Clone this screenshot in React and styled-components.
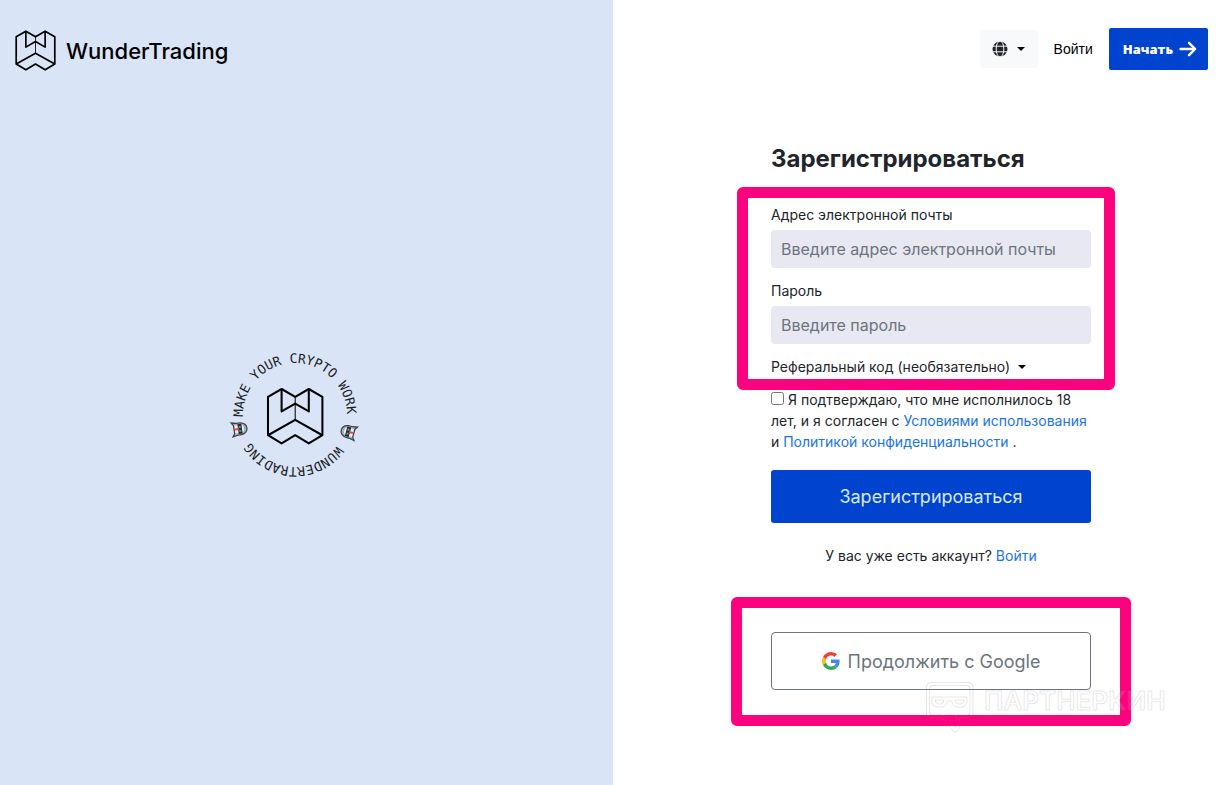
import { useId } from 'react';
import styled, { createGlobalStyle } from 'styled-components';

const GlobalStyle = createGlobalStyle`
  *,
  *::before,
  *::after {
    box-sizing: border-box;
  }

  body {
    margin: 0;
    color: #212529;
    background-color: #fff;
    font-family: Inter, 'Liberation Sans', sans-serif;
    font-size: 14px;
    line-height: 21px;
  }

  button,
  input {
    font: inherit;
  }
`;

const Page = styled.div`
  display: grid;
  grid-template-columns: 613fr 604fr;
  min-height: 100vh;
`;

const BrandPanel = styled.aside`
  display: flex;
  flex-direction: column;
  background-color: #d9e4f7;
`;

const Brand = styled.a`
  display: flex;
  align-items: center;
  gap: 10px;
  padding: 30px 15px 0;
  color: #000;
  font-size: 22px;
  font-weight: 500;
  line-height: 40px;
  text-decoration: none;
`;

const EmblemArea = styled.div`
  flex: 1;
  display: flex;
  align-items: center;
  justify-content: center;
  padding: 0 23px 26px 0;
`;

const FormPanel = styled.div`
  display: flex;
  flex-direction: column;
`;

const Header = styled.header`
  display: flex;
  align-items: center;
  justify-content: flex-end;
  gap: 16px;
  padding: 28px 9px 0 0;
`;

const LanguageButton = styled.button`
  display: flex;
  align-items: center;
  gap: 9px;
  height: 38px;
  padding: 0 13px 0 12px;
  border: 0;
  border-radius: 4px;
  color: #212529;
  background-color: #f8f9fa;
`;

const HeaderLink = styled.a`
  color: #000;
  font-family: 'Liberation Sans', Arial, sans-serif;
  font-size: 14px;
  text-decoration: none;
`;

const StartButton = styled.button`
  display: flex;
  align-items: center;
  justify-content: center;
  gap: 6px;
  height: 42px;
  padding: 0 11px 0 14px;
  border: 0;
  border-radius: 2px;
  color: #fff;
  background-color: #0043ce;
  font-family: 'Open Sans', 'Noto Sans', sans-serif;
  font-size: 13px;
  font-weight: 800;
`;

const Main = styled.main`
  padding: 74px 0 32px 32px;
`;

const Form = styled.form`
  width: 320px;
  margin: 0 auto;
`;

const Title = styled.h1`
  margin: 0 0 31px;
  font-size: 24px;
  font-weight: 700;
  line-height: 30px;
`;

const Marked = styled.div`
  position: relative;
`;

const Frame = styled.div`
  position: absolute;
  inset: ${({ $inset }) => $inset};
  border: 11px solid #ff007f;
  border-radius: 6px;
  pointer-events: none;
`;

const Fields = styled(Marked)`
  display: grid;
  gap: 13px;
`;

const Field = styled.div`
  display: grid;
  gap: 5px;
`;

const Label = styled.label`
  line-height: 20px;
`;

const Input = styled.input`
  width: 100%;
  height: 38px;
  padding: 0 10px;
  border: 0;
  border-radius: 4px;
  color: #212529;
  background-color: #e8e8f2;
  font-size: 16px;

  &::placeholder {
    color: #6c757d;
    opacity: 1;
  }
`;

const ReferralToggle = styled.button`
  display: flex;
  align-items: center;
  gap: 8px;
  padding: 0;
  border: 0;
  color: #212529;
  background: none;
  line-height: 20px;
`;

const Consent = styled.p`
  margin: 12px 0 18px;
`;

const Checkbox = styled.input`
  width: 13px;
  height: 13px;
  margin: 0 4px 0 0;
`;

const Link = styled.a`
  color: #1a73e8;
  text-decoration: none;
`;

const SubmitButton = styled.button`
  width: 100%;
  height: 53px;
  border: 0;
  border-radius: 3px;
  color: #d9e9ff;
  background-color: #0043ce;
  font-size: 18px;
`;

const LoginHint = styled.p`
  margin: 22px 0 66px;
  text-align: center;
`;

const GoogleButton = styled.button`
  display: flex;
  align-items: center;
  justify-content: center;
  gap: 8px;
  width: 100%;
  height: 58px;
  border: 1px solid #6c757d;
  border-radius: 4px;
  color: #6c757d;
  background-color: #fff;
  font-size: 18px;
`;

const Watermark = styled.svg`
  position: absolute;
  top: 49px;
  left: 154px;
  pointer-events: none;
`;

function MarkShape({ strokeWidth }) {
  return (
    <g fill="none" stroke="#000" strokeWidth={strokeWidth} strokeLinejoin="round">
      <path d="M0 23 40 0 80 23 120 0 160 23V136L120 160 80 136 40 160 0 136Z" />
      <path d="M40 0V66L80 43 120 66V0" />
      <path d="M0 136 80 91 160 136" />
      <path d="M80 23V91" strokeWidth={strokeWidth / 2} />
    </g>
  );
}

function Logo() {
  return (
    <svg width="41" height="41" viewBox="-5 -5 170 170" aria-hidden="true">
      <MarkShape strokeWidth={7} />
    </svg>
  );
}

function Robot({ transform }) {
  return (
    <g transform={transform}>
      <path
        d="M-6-2-7-7-4-5H4L7-7 6-2V2Q5 8 0 8T-6 2Z"
        fill="#a9adb6"
        stroke="#3c4048"
        strokeWidth="1.2"
      />
      <path d="M-4-4H4V3Q3 5 0 5T-4 3Z" fill="#f1f2f5" />
      <path d="M-5-1H5V3H-5Z" fill="#23282f" />
      <path d="M-3 0H-1V2H-3ZM1 0H3V2H1Z" fill="#3fa3bb" />
      <path d="M-1-4H1V0H-1Z" fill="#e4472f" />
    </g>
  );
}

function Emblem() {
  const ringId = useId();

  return (
    <svg width="136" height="136" viewBox="-68 -68 136 136">
      <path id={ringId} d="M-52 2A52 52 0 1 1 52-2A52 52 0 1 1-52 2" fill="none" />
      <g fill="#1c1f26" fontFamily="'DejaVu Sans Mono', monospace" fontSize="13">
        <text>
          <textPath href={`#${ringId}`}>MAKE YOUR CRYPTO WORK</textPath>
        </text>
        <text>
          <textPath href={`#${ringId}`} startOffset="198">
            WUNDERTRADING
          </textPath>
        </text>
      </g>
      <Robot transform="translate(54 17) rotate(105)" />
      <Robot transform="translate(-56 14) rotate(-98)" />
      <g transform="translate(-27 -26) scale(.34)">
        <MarkShape strokeWidth={6} />
      </g>
    </svg>
  );
}

function GlobeIcon() {
  return (
    <svg width="16" height="16" viewBox="0 0 16 16" aria-hidden="true">
      <circle cx="8" cy="8" r="7.5" fill="#212529" />
      <g fill="none" stroke="#f8f9fa" strokeWidth="1">
        <path d="M0 5.2H16M0 10.8H16" />
        <ellipse cx="8" cy="8" rx="3.8" ry="8" />
      </g>
    </svg>
  );
}

function Caret() {
  return (
    <svg width="8" height="4" viewBox="0 0 8 4" aria-hidden="true">
      <path d="M0 0H8L4 4Z" fill="#000" />
    </svg>
  );
}

function ArrowIcon() {
  return (
    <svg width="18" height="16" viewBox="0 0 18 16" aria-hidden="true">
      <path
        d="M1.5 8H16M10 1.8 16.2 8 10 14.2"
        fill="none"
        stroke="#fff"
        strokeWidth="2.4"
        strokeLinecap="round"
        strokeLinejoin="round"
      />
    </svg>
  );
}

function GoogleIcon() {
  return (
    <svg width="18" height="18" viewBox="0 0 48 48" aria-hidden="true">
      <path
        fill="#ea4335"
        d="M24 9.5c3.54 0 6.71 1.22 9.21 3.6l6.85-6.85C35.9 2.38 30.47 0 24 0 14.62 0 6.51 5.38 2.56 13.22l7.98 6.19C12.43 13.72 17.74 9.5 24 9.5z"
      />
      <path
        fill="#4285f4"
        d="M46.98 24.55c0-1.57-.15-3.09-.38-4.55H24v9.02h12.94c-.58 2.96-2.26 5.48-4.78 7.18l7.73 6c4.51-4.18 7.09-10.36 7.09-17.65z"
      />
      <path
        fill="#fbbc05"
        d="M10.53 28.59c-.48-1.45-.76-2.99-.76-4.59s.27-3.14.76-4.59l-7.98-6.19C.92 16.46 0 20.12 0 24c0 3.88.92 7.54 2.56 10.78l7.97-6.19z"
      />
      <path
        fill="#34a853"
        d="M24 48c6.48 0 11.93-2.13 15.89-5.81l-7.73-6c-2.15 1.45-4.92 2.3-8.16 2.3-6.26 0-11.57-4.22-13.47-9.91l-7.98 6.19C6.51 42.62 14.62 48 24 48z"
      />
    </svg>
  );
}

function PartnerMark() {
  return (
    <Watermark width="244" height="54" viewBox="0 0 244 54">
      <g fill="none" stroke="#808080" strokeOpacity=".2">
        <path d="M6 1.5H43Q48 1.5 48 6.5V32Q48 37 43 37H34V48Q31 54 27 49L17 37H6Q1.5 37 1.5 32V6.5Q1.5 1.5 6 1.5Z" />
        <path d="M8 4.5H42Q45 4.5 45 7.5V31Q45 34 42 34H31V47L18 34H8Q4.5 34 4.5 31V7.5Q4.5 4.5 8 4.5Z" />
        <path d="M7 16H42V20Q42 26 36 26H33Q27 26 27 20H22Q22 26 16 26H13Q7 26 7 20Z" />
        <path d="M10 19H19Q19 23 15 23H14Q10 23 10 19ZM30 19H39Q39 23 35 23H34Q30 23 30 19Z" />
      </g>
      <text
        x="59"
        y="29"
        fill="#fff"
        fillOpacity=".12"
        stroke="#808080"
        strokeOpacity=".2"
        fontSize="26"
        fontWeight="600"
      >
        ПАРТНЕРКИН
      </text>
    </Watermark>
  );
}

function TextField({ id, label, ...props }) {
  return (
    <Field>
      <Label htmlFor={id}>{label}</Label>
      <Input id={id} {...props} />
    </Field>
  );
}

function SignUpForm() {
  return (
    <Form onSubmit={(e) => e.preventDefault()}>
      <Title>Зарегистрироваться</Title>

      <Fields>
        <TextField
          id="email"
          type="email"
          label="Адрес электронной почты"
          placeholder="Введите адрес электронной почты"
        />
        <TextField
          id="password"
          type="password"
          label="Пароль"
          placeholder="Введите пароль"
        />
        <ReferralToggle type="button">
          Реферальный код (необязательно)
          <Caret />
        </ReferralToggle>
        <Frame $inset="-18px -24px -13px -34px" />
      </Fields>

      <Consent>
        <Checkbox type="checkbox" id="consent" />
        <label htmlFor="consent">
          Я подтверждаю, что мне исполнилось 18 лет, и я согласен с{' '}
          <Link href="#terms">Условиями использования</Link> и{' '}
          <Link href="#privacy">Политикой конфиденциальности</Link> .
        </label>
      </Consent>

      <SubmitButton type="submit">Зарегистрироваться</SubmitButton>

      <LoginHint>
        У вас уже есть аккаунт? <Link href="#login">Войти</Link>
      </LoginHint>

      <Marked>
        <GoogleButton type="button">
          <GoogleIcon />
          Продолжить с Google
        </GoogleButton>
        <Frame $inset="-35px -40px -36px -40px" />
        <PartnerMark />
      </Marked>
    </Form>
  );
}

function App() {
  return (
    <>
      <GlobalStyle />
      <Page>
        <BrandPanel>
          <Brand href="#home">
            <Logo />
            WunderTrading
          </Brand>
          <EmblemArea>
            <Emblem />
          </EmblemArea>
        </BrandPanel>

        <FormPanel>
          <Header>
            <LanguageButton type="button" aria-label="Язык">
              <GlobeIcon />
              <Caret />
            </LanguageButton>
            <HeaderLink href="#login">Войти</HeaderLink>
            <StartButton type="button">
              Начать
              <ArrowIcon />
            </StartButton>
          </Header>
          <Main>
            <SignUpForm />
          </Main>
        </FormPanel>
      </Page>
    </>
  );
}

export default App;
